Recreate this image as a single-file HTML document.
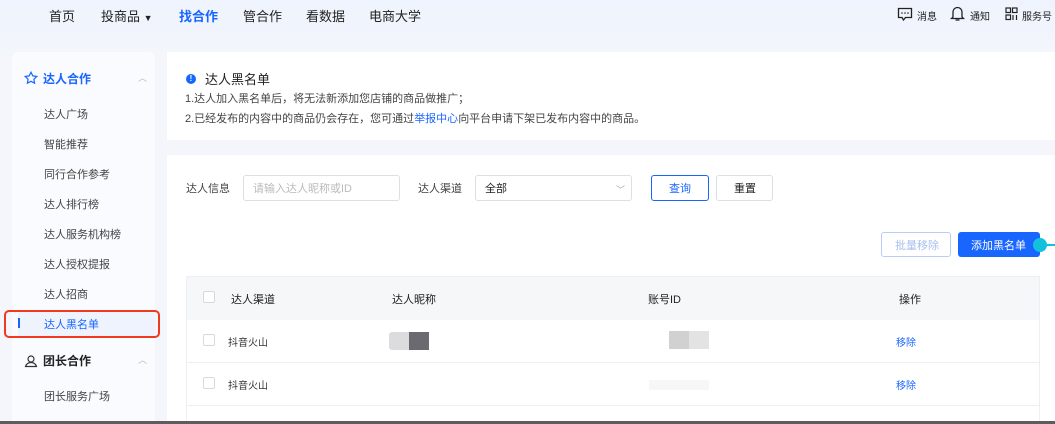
<!DOCTYPE html>
<html><head><meta charset="utf-8"><style>
*{margin:0;padding:0;box-sizing:border-box}
html,body{width:1055px;height:424px;overflow:hidden}
body{background:linear-gradient(180deg,#eef3fd 0,#f4f6fb 60px,#f4f6fb 100%);font-family:"Liberation Sans","Noto Sans CJK SC",sans-serif;color:#333;position:relative;font-size:12px}
.a{position:absolute;white-space:nowrap}
.nav{font-size:13px;color:#222;top:6px}
.side{position:absolute;left:12px;top:52px;width:143px;height:380px;background:#fafbfe;border-radius:6px}
.si{position:absolute;left:44px;font-size:11px;color:#444}
.card{position:absolute;background:#fff}
.box{position:absolute;border:1px solid #dcdfe6;border-radius:3px;background:#fff}
.cb{position:absolute;width:12px;height:12px;border:1px solid #d9d9d9;border-radius:2px;background:#fff}
.th{font-size:11px;color:#222;top:291px}
.rm{font-size:10px;color:#1966ff}
</style></head><body>
<div class="a nav" style="left:49px">首页</div>
<div class="a nav" style="left:101px">投商品 <span style="font-size:9px">▼</span></div>
<div class="a nav" style="left:179px;color:#1966ff;font-weight:bold">找合作</div>
<div class="a nav" style="left:243px">管合作</div>
<div class="a nav" style="left:306px">看数据</div>
<div class="a nav" style="left:369px">电商大学</div>
<svg class="a" style="left:897px;top:7px" width="16" height="15" viewBox="0 0 16 15"><path d="M1.5 1.5h13v9h-6l-2 2.5-1.5-2.5h-3.5z" fill="none" stroke="#222" stroke-width="1.3"/><circle cx="5" cy="6" r=".8" fill="#222"/><circle cx="8" cy="6" r=".8" fill="#222"/><circle cx="11" cy="6" r=".8" fill="#222"/></svg>
<div class="a" style="left:917px;top:8px;font-size:10px;color:#222">消息</div>
<svg class="a" style="left:950px;top:5px" width="15" height="17" viewBox="0 0 15 17"><path d="M3 12V7a4.5 4.5 0 0 1 9 0v5l1.5 1.5h-12z M5.5 15h4" fill="none" stroke="#222" stroke-width="1.3"/></svg>
<div class="a" style="left:970px;top:8px;font-size:10px;color:#222">通知</div>
<svg class="a" style="left:1005px;top:7px" width="13" height="14" viewBox="0 0 13 14"><rect x="1" y="1" width="4.5" height="4.5" fill="none" stroke="#222" stroke-width="1.2"/><rect x="7.5" y="1" width="4.5" height="4.5" fill="none" stroke="#222" stroke-width="1.2"/><rect x="1" y="8" width="4.5" height="4.5" fill="none" stroke="#222" stroke-width="1.2"/><path d="M8 8v5M11.5 8v5" stroke="#222" stroke-width="1.2"/></svg>
<div class="a" style="left:1022px;top:8px;font-size:10px;color:#222">服务号</div>

<div class="side"></div>
<svg class="a" style="left:24px;top:71px" width="14" height="14" viewBox="0 0 14 14"><path d="M7 1.2l1.8 3.7 4 .5-2.9 2.8.7 4-3.6-1.9-3.6 1.9.7-4L1.2 5.4l4-.5z" fill="none" stroke="#1966ff" stroke-width="1.2"/></svg>
<div class="a" style="left:43px;top:70px;font-size:12px;color:#1966ff;font-weight:bold">达人合作</div>
<div class="a" style="left:138px;top:71px;color:#bbb;font-size:9px">︿</div>
<div class="si a" style="top:106px">达人广场</div>
<div class="si a" style="top:136px">智能推荐</div>
<div class="si a" style="top:166px">同行合作参考</div>
<div class="si a" style="top:196px">达人排行榜</div>
<div class="si a" style="top:226px">达人服务机构榜</div>
<div class="si a" style="top:256px">达人授权提报</div>
<div class="si a" style="top:286px">达人招商</div>
<div class="a" style="left:18px;top:310px;width:137px;height:26px;background:#eef3fe"></div>
<div class="a" style="left:18px;top:318px;width:2px;height:10px;background:#1966ff"></div>
<div class="si a" style="top:316px;color:#1966ff">达人黑名单</div>
<div class="a" style="left:4px;top:310px;width:156px;height:28px;border:2px solid #f03a1e;border-radius:5px"></div>
<svg class="a" style="left:24px;top:354px" width="14" height="14" viewBox="0 0 14 14"><circle cx="7" cy="5" r="3" fill="none" stroke="#333" stroke-width="1.2"/><path d="M1.5 12.5c1-3 3-4 5.5-4s4.5 1 5.5 4z" fill="none" stroke="#333" stroke-width="1.2"/></svg>
<div class="a" style="left:43px;top:352px;font-size:12px;color:#222;font-weight:bold">团长合作</div>
<div class="a" style="left:138px;top:353px;color:#bbb;font-size:9px">︿</div>
<div class="si a" style="top:388px">团长服务广场</div>

<div class="card" style="left:167px;top:52px;width:888px;height:88px"></div>
<div class="a" style="left:186px;top:74px;width:10px;height:10px;border-radius:50%;background:#1966ff;color:#fff;font-size:8px;text-align:center;line-height:10px;font-weight:bold">!</div>
<div class="a" style="left:205px;top:69px;font-size:13px;color:#222">达人黑名单</div>
<div class="a" style="left:185px;top:90px;font-size:11px;color:#444">1.达人加入黑名单后，将无法新添加您店铺的商品做推广；</div>
<div class="a" style="left:185px;top:110px;font-size:11px;color:#444">2.已经发布的内容中的商品仍会存在，您可通过<span style="color:#1966ff">举报中心</span>向平台申请下架已发布内容中的商品。</div>

<div class="card" style="left:167px;top:155px;width:888px;height:270px"></div>
<div class="a" style="left:186px;top:180px;font-size:11px;color:#444">达人信息</div>
<div class="box" style="left:243px;top:175px;width:157px;height:26px"></div>
<div class="a" style="left:253px;top:180px;font-size:11px;color:#bbb">请输入达人昵称或ID</div>
<div class="a" style="left:418px;top:180px;font-size:11px;color:#444">达人渠道</div>
<div class="box" style="left:475px;top:175px;width:157px;height:26px"></div>
<div class="a" style="left:485px;top:180px;font-size:11px;color:#222">全部</div>
<div class="a" style="left:616px;top:183px;font-size:9px;color:#aaa">﹀</div>
<div class="box" style="left:651px;top:175px;width:58px;height:26px;border-color:#1966ff"></div>
<div class="a" style="left:669px;top:180px;font-size:11px;color:#1966ff">查询</div>
<div class="box" style="left:716px;top:175px;width:57px;height:26px"></div>
<div class="a" style="left:734px;top:180px;font-size:11px;color:#222">重置</div>
<div class="box" style="left:881px;top:232px;width:70px;height:25px;border-color:#b8cdf8"></div>
<div class="a" style="left:895px;top:237px;font-size:11px;color:#a8c0f0">批量移除</div>
<div class="a" style="left:958px;top:232px;width:82px;height:25px;background:#1966ff;border-radius:3px"></div>
<div class="a" style="left:971px;top:237px;font-size:11px;color:#fff">添加黑名单</div>
<div class="a" style="left:1033px;top:238px;width:14px;height:14px;border-radius:50%;background:#12c2dd"></div>
<div class="a" style="left:1045px;top:244px;width:10px;height:2px;background:#12c2dd"></div>

<div class="a" style="left:186px;top:276px;width:854px;height:150px;border:1px solid #eeeff2;border-bottom:none"></div>
<div class="a" style="left:187px;top:277px;width:852px;height:43px;background:#f6f7f9"></div>
<div class="cb" style="left:203px;top:291px"></div>
<div class="a th" style="left:231px">达人渠道</div>
<div class="a th" style="left:392px">达人昵称</div>
<div class="a th" style="left:648px">账号ID</div>
<div class="a th" style="left:899px">操作</div>
<div class="a" style="left:187px;top:362px;width:852px;height:1px;background:#eeeff2"></div>
<div class="a" style="left:187px;top:405px;width:852px;height:1px;background:#eeeff2"></div>
<div class="cb" style="left:203px;top:334px"></div>
<div class="a" style="left:228px;top:334px;font-size:10px;color:#333">抖音火山</div>
<div class="a" style="left:389px;top:332px;width:20px;height:18px;background:#dcdcde;border-radius:3px 0 0 3px"></div>
<div class="a" style="left:409px;top:332px;width:20px;height:18px;background:#6b6a70"></div>
<div class="a" style="left:669px;top:331px;width:20px;height:18px;background:#d1d1d1"></div>
<div class="a" style="left:689px;top:331px;width:20px;height:18px;background:#e3e3e3"></div>
<div class="a rm" style="left:896px;top:334px">移除</div>
<div class="cb" style="left:203px;top:377px"></div>
<div class="a" style="left:228px;top:377px;font-size:10px;color:#333">抖音火山</div>
<div class="a" style="left:649px;top:380px;width:60px;height:10px;background:#f7f7f7"></div>
<div class="a rm" style="left:896px;top:377px">移除</div>
<div class="a" style="left:0;top:421px;width:1055px;height:3px;background:#5d5d60"></div>
</body></html>
